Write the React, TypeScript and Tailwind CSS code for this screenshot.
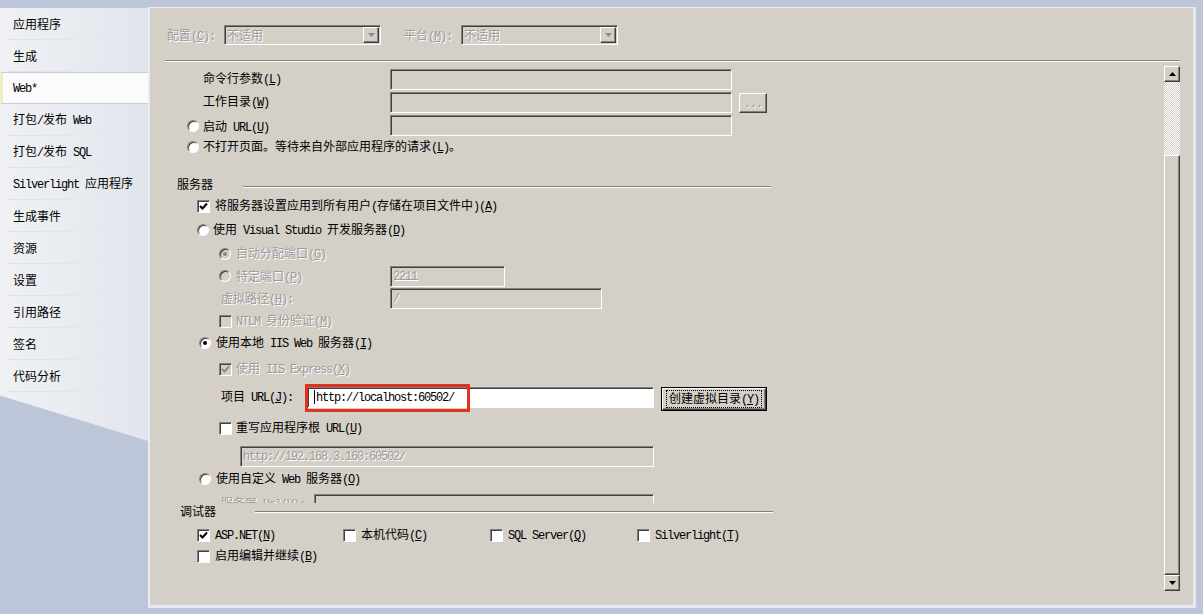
import React from "react";

type Run = { a: boolean; u: boolean; s: string };

// "&X" marks the mnemonic letter; ascii runs get the narrow mono face
function split(t: string): Run[] {
  const out: Run[] = [];
  for (let i = 0; i < t.length; i++) {
    let c = t[i];
    let u = false;
    if (c === "&" && i + 1 < t.length) {
      u = true;
      c = t[++i];
    }
    const a = c.charCodeAt(0) < 128;
    const last = out[out.length - 1];
    if (last && last.a === a && !u && !last.u) last.s += c;
    else out.push({ a, u, s: c });
  }
  return out;
}

const Txt = ({ t, off }: { t: string; off?: boolean }) => (
  <span
    className={`whitespace-pre leading-[14px] ${
      off ? "text-[#9b9b9b] [text-shadow:1px_1px_0_#ffffff]" : "text-black"
    }`}
  >
    {split(t).map((r, i) =>
      r.a ? (
        <span
          key={i}
          className={`font-['Liberation_Mono',monospace] text-[12px] tracking-[-1.2px] ${r.u ? "underline" : ""}`}
        >
          {r.s}
        </span>
      ) : (
        <span key={i} className={r.u ? "underline" : ""}>
          {r.s}
        </span>
      )
    )}
  </span>
);

const sunk =
  "border border-t-[#808080] border-l-[#808080] border-b-white border-r-white shadow-[inset_1px_1px_0_#404040]";
const raised =
  "border border-t-white border-l-white border-r-[#404040] border-b-[#404040] shadow-[inset_-1px_-1px_0_#808080] bg-[#d4d0c8]";

const Field = ({ w, value, white, off }: { w: string; value?: string; white?: boolean; off?: boolean }) => (
  <div className={`${w} h-[21px] ${sunk} ${white ? "bg-white pl-[6px]" : "bg-[#d4d0c8] pl-[2px]"} flex items-center overflow-hidden`}>
    {white && <div className="w-px h-[14px] bg-black mr-px" />}
    {value && <Txt t={value} off={off} />}
  </div>
);

const Check = ({ on, off }: { on?: boolean; off?: boolean }) => (
  <div className={`w-[13px] h-[13px] shrink-0 ${sunk} ${off ? "bg-[#d4d0c8]" : "bg-white"} flex items-center justify-center`}>
    {on && (
      <svg width="9" height="9" viewBox="0 0 9 9">
        <polyline points="1,4 3.5,6.5 8,1.5" fill="none" stroke={off ? "#8a8a8a" : "#000"} strokeWidth="2" />
      </svg>
    )}
  </div>
);

const Radio = ({ on, off }: { on?: boolean; off?: boolean }) => (
  <div
    className={`w-[12px] h-[12px] shrink-0 rounded-full border border-t-[#808080] border-l-[#808080] border-b-white border-r-white shadow-[inset_1px_1px_0_#404040] ${
      off ? "bg-[#d4d0c8]" : "bg-white"
    } flex items-center justify-center`}
  >
    {on && <div className={`w-[4px] h-[4px] rounded-full ${off ? "bg-[#8a8a8a]" : "bg-black"}`} />}
  </div>
);

const Arrow = ({ up, gray }: { up?: boolean; gray?: boolean }) => (
  <svg width="7" height="4" viewBox="0 0 7 4">
    <polygon points={up ? "0,4 7,4 3.5,0" : "0,0 7,0 3.5,4"} fill={gray ? "#8a8a8a" : "#000"} />
  </svg>
);

const Combo = () => (
  <div className={`w-[157px] h-[20px] ${sunk} bg-[#d4d0c8] flex items-center justify-between pl-[2px] pr-[1px]`}>
    <Txt t="不适用" off />
    <div className={`w-[16px] h-[16px] ${raised} flex items-center justify-center`}>
      <Arrow gray />
    </div>
  </div>
);

const Etch = ({ w }: { w: string }) => <div className={`${w} h-[2px] border-t border-t-[#808080] border-b border-b-white`} />;

const nav = [
  "应用程序",
  "生成",
  "Web*",
  "打包/发布 Web",
  "打包/发布 SQL",
  "Silverlight 应用程序",
  "生成事件",
  "资源",
  "设置",
  "引用路径",
  "签名",
  "代码分析",
];

const Sidebar = () => (
  <div className="w-[148px] h-[433px] mt-[1px] bg-gradient-to-r from-[#eff1f4] to-[#e1e5ec] [clip-path:polygon(0_0,100%_0,100%_100%,0_89.5%)]">
    {nav.map((n) => (
      <div
        key={n}
        className={`h-[32px] flex items-center relative ${
          n === "Web*" ? "bg-[#fbfbfb] border-y border-[#c9cdd5] border-l-[3px] border-l-[#f2ebc8] pl-[10px]" : "pl-[13px]"
        }`}
      >
        <Txt t={n} />
        {n !== "Web*" && (
          <div className="absolute left-[8px] bottom-0 w-[120px] h-px bg-gradient-to-r from-[#dcdfe6] to-transparent" />
        )}
      </div>
    ))}
  </div>
);

const Scrollbar = () => (
  <div className="w-[16px] h-[525px] mt-[4px] mr-[13px] flex flex-col">
    <div className={`h-[16px] ${raised} flex items-center justify-center`}>
      <Arrow up />
    </div>
    <div className="h-[73px] bg-[repeating-conic-gradient(#d4d0c8_0_25%,#ffffff_0_50%)] bg-[length:2px_2px]" />
    <div className={`flex-1 ${raised}`} />
    <div className={`h-[16px] ${raised} flex items-center justify-center`}>
      <Arrow />
    </div>
  </div>
);

const ScrollView = () => (
  <div className="h-[441px] overflow-hidden">
    <div className="pt-[6px]">
      <div className="flex items-center h-[23px] pl-[53px]">
        <div className="w-[187px] mb-[3px]"><Txt t="命令行参数(&L)" /></div>
        <Field w="w-[342px]" />
      </div>
      <div className="flex items-center h-[23px] pl-[53px]">
        <div className="w-[187px] mb-[3px]"><Txt t="工作目录(&W)" /></div>
        <Field w="w-[342px]" />
        <div className={`ml-[7px] w-[28px] h-[20px] ${raised} flex items-center justify-center`}>
          <Txt t="..." off />
        </div>
      </div>
      <div className="flex items-center h-[23px] pl-[37px]">
        <div className="w-[16px]"><Radio /></div>
        <div className="w-[187px]"><Txt t="启动 URL(&U)" /></div>
        <Field w="w-[342px]" />
      </div>
      <div className="flex items-center h-[20px] pl-[37px]">
        <div className="w-[16px]"><Radio /></div>
        <Txt t="不打开页面。等待来自外部应用程序的请求(&L)。" />
      </div>

      <div className="flex items-center h-[20px] mt-[17px] pl-[27px]">
        <Txt t="服务器" />
        <div className="ml-[30px] mt-[6px]"><Etch w="w-[528px]" /></div>
      </div>
      <div className="flex items-center h-[24px] pl-[47px] gap-[5px]">
        <Check on />
        <Txt t="将服务器设置应用到所有用户(存储在项目文件中)(&A)" />
      </div>
      <div className="flex items-center h-[24px] pl-[47px] gap-[4px]">
        <Radio />
        <Txt t="使用 Visual Studio 开发服务器(&D)" />
      </div>
      <div className="flex items-center h-[24px] pl-[69px] gap-[5px]">
        <Radio on off />
        <Txt t="自动分配端口(&G)" off />
      </div>
      <div className="flex items-center h-[20px] pl-[69px]">
        <div className="w-[17px]"><Radio off /></div>
        <div className="w-[154px]"><Txt t="特定端口(&P)" off /></div>
        <Field w="w-[115px]" value="2211" off />
      </div>
      <div className="flex items-center h-[24px] pl-[71px]">
        <div className="w-[169px]"><Txt t="虚拟路径(&H):" off /></div>
        <Field w="w-[212px]" value="/" off />
      </div>
      <div className="flex items-center h-[22px] pl-[69px] gap-[4px]">
        <Check off />
        <Txt t="NTLM 身份验证(&M)" off />
      </div>
      <div className="flex items-center h-[22px] pl-[49px] gap-[5px]">
        <Radio on />
        <Txt t="使用本地 IIS Web 服务器(&I)" />
      </div>
      <div className="flex items-center h-[30px] pl-[69px] gap-[4px]">
        <Check on off />
        <Txt t="使用 IIS Express(&X)" off />
      </div>
      <div className="flex items-center h-[26px] pl-[71px]">
        <div className="w-[86px] mb-[3px]"><Txt t="项目 URL(&J):" /></div>
        <div className="relative">
          <Field w="w-[347px]" value="http://localhost:60502/" white />
          <div className="absolute left-[-2px] top-[-3px] w-[165px] h-[28px] border-[3px] border-[#e0321e]" />
        </div>
        <div className="ml-[7px] mt-[3px] w-[106px] h-[24px] border border-black">
          <div className={`w-full h-full ${raised} flex items-center justify-center`}>
            <div className="px-[2px] border border-dotted border-black leading-[14px]">
              <Txt t="创建虚拟目录(&Y)" />
            </div>
          </div>
        </div>
      </div>
      <div className="flex items-center h-[36px] pl-[69px] gap-[4px]">
        <Check />
        <Txt t="重写应用程序根 URL(&U)" />
      </div>
      <div className="flex items-center h-[20px] pl-[90px]">
        <Field w="w-[414px]" value="http://192.168.3.160:60502/" off />
      </div>
      <div className="flex items-center h-[26px] pl-[49px] gap-[5px]">
        <Radio />
        <Txt t="使用自定义 Web 服务器(&O)" />
      </div>
      <div className="flex items-start h-[20px] pl-[71px] pt-[2px]">
        <div className="w-[93px]"><Txt t="服务器 Url(&V):" off /></div>
        <Field w="w-[340px]" />
      </div>
    </div>
  </div>
);

const Debugger = () => (
  <div>
    <div className="flex items-center h-[16px] pl-[30px]">
      <Txt t="调试器" />
      <div className="ml-[39px] mt-[2px]"><Etch w="w-[518px]" /></div>
    </div>
    <div className="flex items-center h-[20px] mt-[6px] pl-[47px]">
      <div className="w-[146px] flex items-center gap-[5px]"><Check on /><Txt t="ASP.NET(&N)" /></div>
      <div className="w-[147px] flex items-center gap-[5px]"><Check /><Txt t="本机代码(&C)" /></div>
      <div className="w-[147px] flex items-center gap-[5px]"><Check /><Txt t="SQL Server(&Q)" /></div>
      <div className="w-[147px] flex items-center gap-[5px]"><Check /><Txt t="Silverlight(&T)" /></div>
    </div>
    <div className="flex items-center h-[22px] pl-[47px] gap-[5px]">
      <Check />
      <Txt t="启用编辑并继续(&B)" />
    </div>
  </div>
);

export default function App() {
  return (
    <div className="w-[1203px] h-[614px] overflow-hidden bg-[#bcc6d8] pt-[7px] flex items-start font-['Noto_Sans_CJK_SC','Liberation_Sans',sans-serif] text-[12px]">
      <Sidebar />
      <div className="w-[1048px] h-[601px] border-l-2 border-t border-r-[3px] border-b-[3px] border-l-[#e9edf3] border-t-[#ece9e2] border-r-[#e4e8ef] border-b-[#e4e8ef] bg-[#d4d0c8] flex flex-col">
        <div className="flex items-center h-[20px] mt-[17px] pl-[17px]">
          <div className="w-[57px]"><Txt t="配置(&C):" off /></div>
          <Combo />
          <div className="w-[57px] ml-[23px]"><Txt t="平台(&M):" off /></div>
          <Combo />
        </div>
        <div className="mt-[15px] ml-[15px] mr-[13px]"><Etch w="w-full" /></div>
        <div className="flex">
          <div className="flex-1">
            <ScrollView />
            <Debugger />
          </div>
          <Scrollbar />
        </div>
      </div>
    </div>
  );
}
